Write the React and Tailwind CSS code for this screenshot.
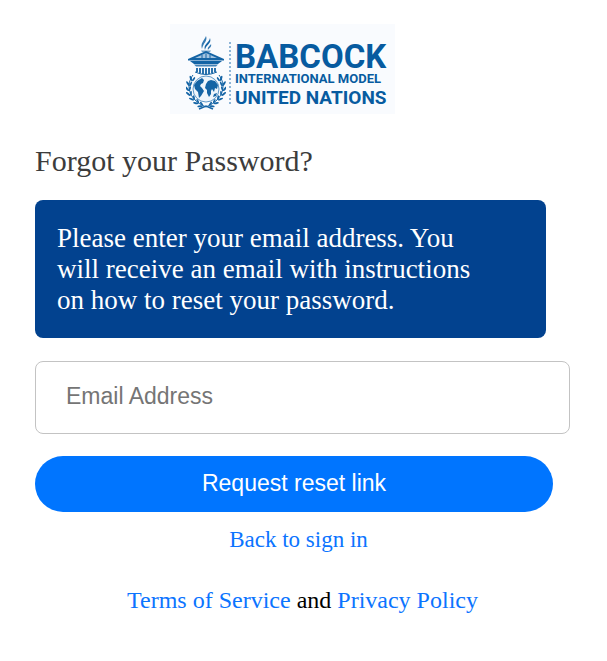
const laurel = [
  [6, 43, 8], [3, 48, -4], [2, 53, -12], [3, 58, -24], [6, 63, -40], [10, 67, -54], [14, 70, -66],
];

function Leaves() {
  return (
    <g>
      <path d="M7 40C0 49 1 64 20 72" fill="none" stroke="currentColor" strokeWidth="1" />
      {laurel.map(([x, y, turn]) => (
        <g key={y} transform={`translate(${x} ${y}) rotate(${turn})`}>
          <ellipse cx="-1.2" cy="0" rx="1" ry="2.8" transform="rotate(-28)" />
          <ellipse cx="2" cy="0" rx="0.9" ry="2.4" transform="rotate(28)" />
        </g>
      ))}
    </g>
  );
}

function Emblem() {
  return (
    <svg viewBox="0 0 40 76" className="h-[76px] w-10 shrink-0 text-[#1464a5]" fill="currentColor" aria-hidden="true">
      <path d="M16 14C14 8 18 6 20 1C22 6 17 8 16 14Z" opacity="0.85" />
      <path d="M19 15C17 9 23 8 24 3C26 9 20 9 19 15Z" />
      <path d="M22 15C21 12 24 11 25 9C26 12 23 13 22 15Z" opacity="0.85" />
      <path d="M15 15.500H25L24 17H16Z" opacity="0.6" />
      <path d="M20 16L38 24V25.500H2V24Z" />
      <path d="M9 23L20 18L31 23Z" fill="#a5c5e1" />
      <path d="M20 18.500V23M16 20V23M24 20V23" stroke="currentColor" strokeWidth="1" />
      <path d="M4 26H36L32 29H8Z" />
      <path d="M8 29.500H32L30 31.500H10Z" opacity="0.8" />
      <path d="M11 33V37M14 33V38.500M17 33V39M20 33V39M23 33V39M26 33V38.500M29 33V37" stroke="currentColor" strokeWidth="1.800" />
      <path d="M9 37Q20 42 31 37" fill="none" stroke="currentColor" strokeWidth="1" />
      <circle cx="20" cy="54" r="13" fill="#eef5fb" stroke="#5f98c8" strokeWidth="1" />
      <path d="M8 50L11 46L16 43L18 45L17 48L15 49L14 51L16 53L18 56L15 61L13 63L12 57L9 54Z" />
      <path d="M20 49L22 46L25 45L29 46L32 50L31 54L29 53L28 57L26 54L25 56L25 59L23 62L21 58L21 55L19 53Z" />
      <path d="M28 59L31 58L30 61L27 62Z" />
      <Leaves />
      <g transform="translate(40 0) scale(-1 1)">
        <Leaves />
      </g>
      <path d="M13 74L20 71L27 74" fill="none" stroke="currentColor" strokeWidth="1.500" />
    </svg>
  );
}

function Logo() {
  return (
    <div className="flex h-[90px] w-[225px] items-center bg-[#f9fbfe] pt-2 pl-4">
      <Emblem />
      <div className="ml-[3px] h-[62px] border-l-2 border-dotted border-[#8eb5d7]" />
      <div className="ml-1 flex flex-col pt-1.5 font-[Roboto,'Liberation_Sans',sans-serif] font-bold whitespace-nowrap text-[#075ba0]">
        <span className="text-[33px] leading-[30px]">BABCOCK</span>
        <span className="text-[13px] leading-[14px]">INTERNATIONAL MODEL</span>
        <span className="text-[19px] leading-6">UNITED NATIONS</span>
      </div>
    </div>
  );
}

export default function App() {
  return (
    <main className="min-h-screen bg-white pt-6 pr-[37px] pb-10 pl-[35px] font-['Liberation_Serif','Times_New_Roman',serif]">
      <header className="flex justify-center pr-10">
        <Logo />
      </header>

      <h1 className="mt-[29px] text-[30px] leading-9 text-[#3c3c3c]">Forgot your Password?</h1>

      <p className="mt-[21px] mr-6 rounded-lg bg-[#02428f] pt-[23px] pr-16 pb-[22px] pl-[22px] text-[27px] leading-[31px] text-white">
        Please enter your email address. You will receive an email with instructions on how to reset your password.
      </p>

      <form className="mt-[23px] font-['Liberation_Sans',Arial,sans-serif] text-[23px]" onSubmit={(e) => e.preventDefault()}>
        <input
          type="email"
          aria-label="Email Address"
          placeholder="Email Address"
          className="block h-[73px] w-full rounded-lg border border-[#c3c3c3] px-[30px] pb-0.5 placeholder:text-[#757575]"
        />
        <div className="mt-[22px] pr-[17px]">
          <button type="submit" className="block h-14 w-full rounded-full bg-[#0075ff] pb-0.5 text-white">
            Request reset link
          </button>
        </div>
      </form>

      <div className="mt-3 pr-2 text-center text-[23px] leading-8">
        <a href="#signin" className="text-[#0b74ff]">Back to sign in</a>
      </div>
      <footer className="mt-7 text-center text-[24px] leading-8 text-black">
        <a href="#terms" className="text-[#0b74ff]">Terms of Service</a> and{' '}
        <a href="#privacy" className="text-[#0b74ff]">Privacy Policy</a>
      </footer>
    </main>
  );
}
